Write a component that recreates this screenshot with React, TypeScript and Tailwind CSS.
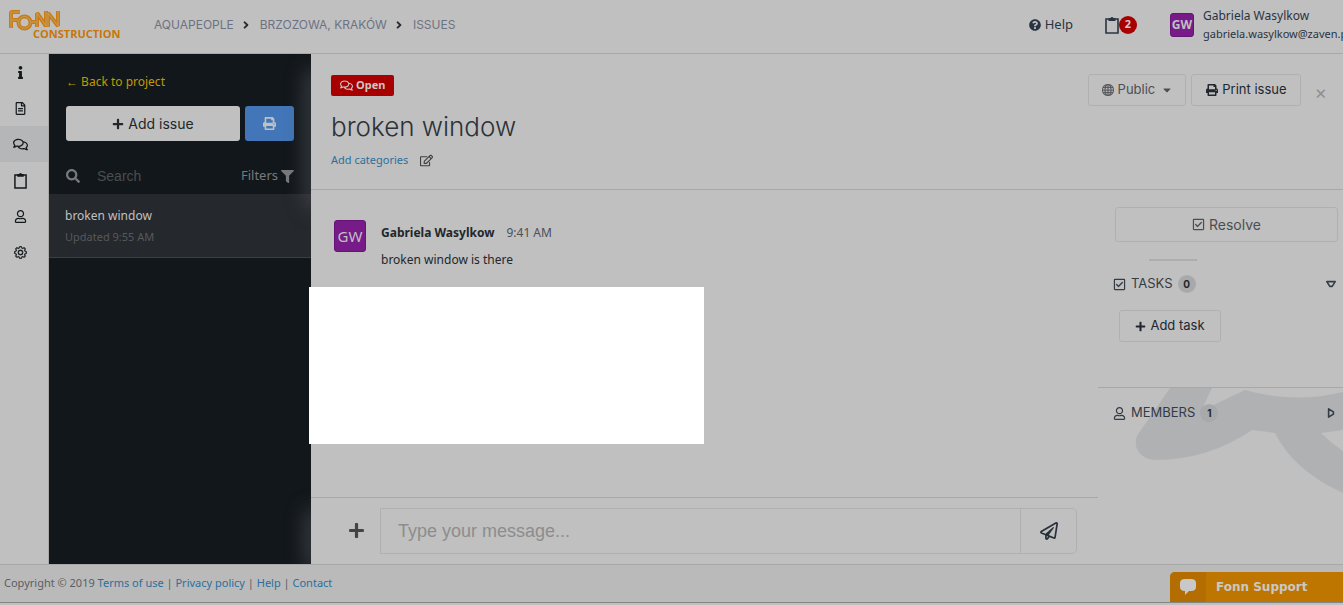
import {
  FaAngleRight,
  FaCaretDown,
  FaFilter,
  FaInfo,
  FaPlus,
  FaPrint,
  FaQuestionCircle,
  FaRegCheckSquare,
  FaRegComments,
  FaRegEdit,
  FaRegFileAlt,
  FaRegPaperPlane,
  FaRegUser,
  FaSearch,
} from "react-icons/fa";
import { BsGear, BsGlobe } from "react-icons/bs";

function ClipboardIcon({ className }: { className?: string }) {
  return (
    <svg viewBox="0 0 14 18" className={className} fill="none" aria-hidden="true">
      <path d="M1 3h12v14H1z" stroke="currentColor" strokeWidth="1.6" />
      <path d="M3.5 2H5.6a1.5 1.5 0 0 1 2.8 0h2.1v3h-7z" fill="currentColor" />
    </svg>
  );
}

function CaretIcon({ className }: { className?: string }) {
  return (
    <svg viewBox="0 0 10 10" className={className} fill="none" aria-hidden="true">
      <path d="M1.5 3H8.5L6 7H4Z" stroke="currentColor" strokeWidth="1.3" strokeLinejoin="round" />
    </svg>
  );
}

function Logo() {
  const letters = "M20 14H11V30M11 22H18M37 29V15L46 28V13M48 29V15L58 28V13M31 24H36";
  return (
    <svg viewBox="4 2 120 49" className="h-[49px] w-[120px]" fill="none" role="img" aria-label="Fonn Construction">
      <g strokeLinejoin="bevel">
        <path d={letters} stroke="#c87c13" strokeWidth="4" />
        <circle cx="24.5" cy="24.5" r="6" stroke="#c87c13" strokeWidth="4" />
        <path d={letters} stroke="#c4a067" strokeWidth="1" />
        <circle cx="24.5" cy="24.5" r="6" stroke="#c4a067" strokeWidth="1" />
      </g>
      <text x="33" y="40" fontSize="11" fontWeight="700" fill="#c87606" fontFamily="Open Sans, sans-serif">
        CONSTRUCTION
      </text>
    </svg>
  );
}

const crumbs = ["AQUAPEOPLE", "BRZOZOWA, KRAKÓW", "ISSUES"];

function Header() {
  return (
    <header className="flex h-[54px] shrink-0 items-center border-b border-[#a8a8a8] pb-1 pl-1">
      <a href="#home">
        <Logo />
      </a>
      <nav aria-label="Breadcrumb" className="ml-[30px] flex items-center gap-[6px] font-[Inter] text-[12px] text-[#6d7282]">
        {crumbs.map((crumb, i) => (
          <span key={crumb} className="flex items-center gap-2">
            {i > 0 && <FaAngleRight className="size-3 text-[#2c2c2c]" />}
            <a href="#crumb">{crumb}</a>
          </span>
        ))}
      </nav>
      <div className="ml-auto flex items-center overflow-hidden whitespace-nowrap text-[#2a3440]">
        <a href="#help" className="flex items-center gap-1 text-[13px]">
          <FaQuestionCircle className="size-3" />
          Help
        </a>
        <button type="button" aria-label="Notifications" className="ml-8 flex items-center">
          <ClipboardIcon className="h-[18px] w-[14px]" />
          <span className="flex size-[18px] items-center justify-center rounded-full bg-[#a80000] text-[11px] font-bold text-[#c8c8c8]">
            2
          </span>
        </button>
        <span className="ml-[33px] flex size-6 items-center justify-center rounded-[3px] border border-[#671478] bg-[#761b88] text-[12px] font-bold text-[#c0c0c0]">
          GW
        </span>
        <div className="ml-[9px] w-[140px]">
          <div className="text-[12px] leading-[18px]">Gabriela Wasylkow</div>
          <div className="text-[11px] leading-[18px]">gabriela.wasylkow@zaven.pl</div>
        </div>
      </div>
    </header>
  );
}

const navItems = [
  { label: "Info", icon: <FaInfo className="size-[13px]" /> },
  { label: "Documents", icon: <FaRegFileAlt className="size-[13px]" /> },
  { label: "Issues", icon: <FaRegComments className="size-[15px]" />, active: true },
  { label: "Tasks", icon: <ClipboardIcon className="h-[17px] w-[13px]" /> },
  { label: "Members", icon: <FaRegUser className="size-[13px]" /> },
  { label: "Settings", icon: <BsGear className="size-[13px]" strokeWidth={0.5} /> },
];

function Rail() {
  return (
    <nav aria-label="Project" className="flex w-[49px] shrink-0 flex-col border-r border-[#a8a8a8] text-[#15191c]">
      {navItems.map((item) => (
        <a
          key={item.label}
          href="#nav"
          aria-label={item.label}
          className={`flex h-9 items-center justify-center pr-[7px] ${item.active ? "bg-[#b4b6b8]" : ""}`}
        >
          {item.icon}
        </a>
      ))}
    </nav>
  );
}

function IssueList() {
  return (
    <aside className="relative w-[262px] shrink-0 overflow-hidden bg-[#12171b]">
      <div className="absolute top-[20px] -right-1 h-[130px] w-1 shadow-[0_0_20px_4px_#4a4d55]" />
      <div className="absolute -right-1 bottom-0 h-[50px] w-1 shadow-[0_0_20px_4px_#4a4d55]" />
      <div className="px-[17px] pt-[19px]">
        <a href="#project" className="block text-[12px] leading-[18px] text-[#c09a00]">
          ← Back to project
        </a>
        <div className="mt-[15px] flex gap-[5px]">
          <button
            type="button"
            className="flex h-[35px] flex-1 items-center justify-center gap-1 rounded-[3px] bg-[#c0c0c0] font-[Inter] text-[14px] text-[#22272b]"
          >
            <FaPlus className="size-3" />
            Add issue
          </button>
          <button
            type="button"
            aria-label="Print issues"
            className="flex h-[35px] w-[49px] items-center justify-center rounded-[3px] bg-[#4276b9] text-[#c0c0c0]"
          >
            <FaPrint className="size-[13px]" />
          </button>
        </div>
        <div className="mt-[17px] flex h-9 items-center text-[#777a7d]">
          <FaSearch className="size-[14px]" />
          <input
            aria-label="Search issues"
            placeholder="Search"
            className="ml-[17px] w-[120px] bg-transparent font-[Liberation_Sans] text-[14px] outline-none placeholder:text-[#4a4e51]"
          />
          <button type="button" className="ml-auto flex items-center gap-[3px] text-[13px]">
            Filters
            <FaFilter className="size-[13px]" />
          </button>
        </div>
      </div>
      <a href="#issue" className="block h-16 border-b border-[#3a3d41] bg-[#25282c] px-4 pt-[13px]">
        <div className="text-[12px] leading-[18px] text-[#c0c0c0]">broken window</div>
        <div className="mt-[3px] text-[11px] leading-[18px] text-[#56595c]">Updated 9:55 AM</div>
      </a>
    </aside>
  );
}

function IssueHeader() {
  return (
    <div className="flex h-[136px] shrink-0 items-start border-b border-[#a8a8a8] pt-5 pl-5">
      <div>
        <span className="inline-flex h-[21px] items-center gap-[3px] rounded-[2px] bg-[#a80000] px-[9px] text-[11px] font-bold text-[#c8c8c8]">
          <FaRegComments className="size-[13px]" />
          Open
        </span>
        <h1 className="mt-[13px] font-[Inter] text-[26px] leading-8 font-light text-[#2c3237]">broken window</h1>
        <div className="mt-2 flex items-center gap-3 text-[11px] leading-[18px]">
          <a href="#categories" className="text-[#2b6f9d]">
            Add categories
          </a>
          <button type="button" aria-label="Edit categories">
            <FaRegEdit className="size-[13px] text-[#3a3d40]" />
          </button>
        </div>
      </div>
      <div className="ml-auto flex gap-[5px] pr-4 font-[Inter] text-[13px] text-[#22272f]">
        <button
          type="button"
          className="flex h-8 w-[98px] items-center justify-center gap-1 rounded-[3px] border border-[#b0b0b0] text-[#4c4f52]"
        >
          <BsGlobe className="size-3" strokeWidth={0.3} />
          Public
          <FaCaretDown className="ml-[2px] size-3" />
        </button>
        <button
          type="button"
          className="flex h-8 w-[110px] items-center justify-center gap-1 rounded-[3px] border border-[#b0b0b0]"
        >
          <FaPrint className="size-3" />
          Print issue
        </button>
        <button type="button" aria-label="Close" className="ml-2 pt-[5px] text-[19px] text-[#909090]">
          ×
        </button>
      </div>
    </div>
  );
}

function Conversation() {
  return (
    <section className="relative flex min-w-0 flex-1 flex-col">
      <div className="flex-1 pt-[30px] pl-[23px]">
        <div className="flex items-start gap-[15px]">
          <span className="flex size-8 items-center justify-center rounded-[3px] border border-[#671478] bg-[#761b88] text-[15px] text-[#c0c0c0]">
            GW
          </span>
          <div className="pt-1 text-[12px] leading-[18px] text-[#22272b]">
            <div>
              <span className="font-bold">Gabriela Wasylkow</span>
              <span className="ml-3 text-[#4a5058]">9:41 AM</span>
            </div>
            <p className="mt-[9px]">broken window is there</p>
          </div>
        </div>
      </div>
      <div className="absolute top-[97px] -left-[2px] z-10 h-[157px] w-[395px] bg-white" />
      <form className="flex h-[67px] items-start border-t border-[#a8a8a8] pt-[10px] pr-[21px] pl-[37px]">
        <button type="button" aria-label="Attach" className="mt-[14px] text-[#444444]">
          <FaPlus className="size-[17px]" />
        </button>
        <div className="ml-[15px] flex h-[46px] flex-1 rounded-r-[5px] border border-[#b0b0b0]">
          <input
            aria-label="Message"
            placeholder="Type your message..."
            className="min-w-0 flex-1 bg-transparent px-[17px] font-[Liberation_Sans] text-[18px] outline-none placeholder:text-[#8d8d8d]"
          />
          <button
            type="submit"
            aria-label="Send"
            className="flex w-14 items-center justify-center border-l border-[#b0b0b0] text-[#27303b]"
          >
            <FaRegPaperPlane className="size-[18px]" />
          </button>
        </div>
      </form>
    </section>
  );
}

function CountBadge({ count }: { count: number }) {
  return (
    <span className="flex size-[18px] items-center justify-center rounded-full bg-[#a8a9aa] text-[10px] font-bold text-[#22272b]">
      {count}
    </span>
  );
}

function DetailsPanel() {
  return (
    <aside className="flex w-[245px] shrink-0 flex-col font-[Inter] text-[#353b45]">
      <div className="h-[198px] border-b border-[#a8a8a8] pt-[17px]">
        <button
          type="button"
          className="ml-[17px] flex h-[35px] w-[223px] items-center justify-center gap-1 rounded-[3px] border border-[#b0b0b0] text-[14px] text-[#4c4f52]"
        >
          <FaRegCheckSquare className="size-[13px]" />
          Resolve
        </button>
        <div className="mt-[17px] ml-[51px] h-[2px] w-12 bg-[#adadad]" />
        <div className="mt-[14px] flex h-[18px] items-center gap-[5px] pr-[6px] pl-[15px]">
          <FaRegCheckSquare className="size-[13px]" />
          <h2 className="text-[13px]">TASKS</h2>
          <CountBadge count={0} />
          <button type="button" aria-label="Collapse tasks" className="ml-auto">
            <CaretIcon className="size-3" />
          </button>
        </div>
        <button
          type="button"
          className="mt-[17px] ml-[21px] flex h-8 w-[102px] items-center justify-center gap-1 rounded-[3px] border border-[#b0b0b0] text-[13px] text-[#22272f]"
        >
          <FaPlus className="size-[11px]" />
          Add task
        </button>
      </div>
      <div className="relative flex-1 overflow-hidden">
        <svg viewBox="0 0 245 110" className="absolute top-0 left-0 h-[110px] w-[245px]" aria-hidden="true">
          <path
            d="M72 0H114L103 23L147 2Q196 16 245 4V42L223 45Q233 55 245 63V105Q195 82 177 45L154 42Q110 72 57 72Q45 72 39 61Q35 51 43 42Z"
            fill="#afb1b3"
          />
        </svg>
        <div className="relative flex h-[50px] items-center gap-[5px] pr-[6px] pl-[15px]">
          <FaRegUser className="size-[13px]" />
          <h2 className="text-[13px]">MEMBERS</h2>
          <CountBadge count={1} />
          <button type="button" aria-label="Expand members" className="ml-auto">
            <CaretIcon className="size-3 -rotate-90" />
          </button>
        </div>
      </div>
    </aside>
  );
}

const footerLinks = ["Terms of use", "Privacy policy", "Help", "Contact"];

function Footer() {
  return (
    <footer className="shrink-0 pb-[2px]">
      <div className="flex h-[39px] items-center justify-between border-t border-b border-t-[#a8a8a8] border-b-[#868686] bg-[#bababa] pl-1">
        <p className="text-[11px] text-[#5b5e61]">
          Copyright © 2019{" "}
          {footerLinks.map((link, i) => (
            <span key={link}>
              {i > 0 && " | "}
              <a href="#footer" className="text-[#2b6f9d]">
                {link}
              </a>
            </span>
          ))}
        </p>
        <button
          type="button"
          className="flex h-[30px] w-[173px] items-center self-end overflow-hidden rounded-tl-[5px] bg-[#bf7600] font-[DejaVu_Sans] text-[12px] font-bold text-[#c8c8c8]"
        >
          <span className="flex h-full w-9 items-center justify-center bg-[#b36d00]">
            <svg viewBox="0 0 16 16" className="size-4" fill="currentColor" aria-hidden="true">
              <path d="M5 0h6q5 0 5 4v4q0 4-5 4H9L5 16V12Q0 12 0 8V4Q0 0 5 0z" />
            </svg>
          </span>
          <span className="ml-[10px]">Fonn Support</span>
        </button>
      </div>
    </footer>
  );
}

export default function App() {
  return (
    <div className="flex min-h-screen flex-col overflow-hidden bg-[#c0c0c0] font-['Noto_Sans',sans-serif]">
      <Header />
      <div className="flex flex-1">
        <Rail />
        <IssueList />
        <main className="flex min-w-0 flex-1 flex-col">
          <IssueHeader />
          <div className="flex flex-1">
            <Conversation />
            <DetailsPanel />
          </div>
        </main>
      </div>
      <Footer />
    </div>
  );
}
